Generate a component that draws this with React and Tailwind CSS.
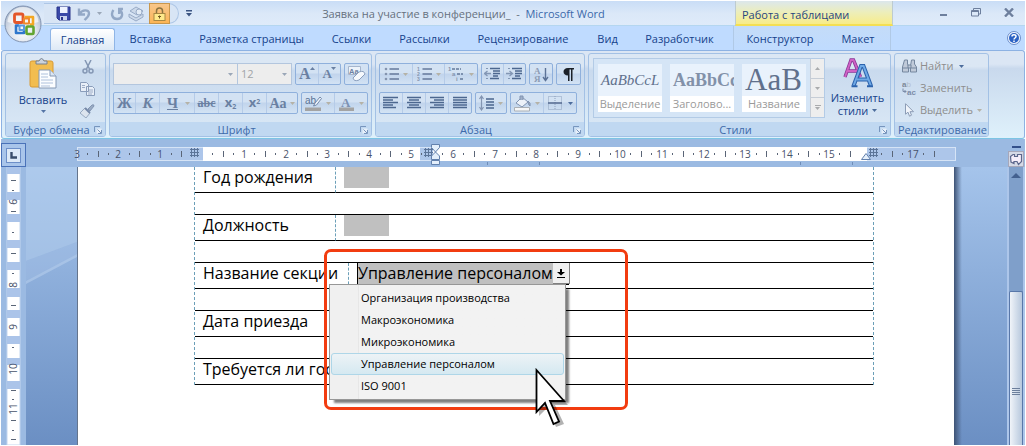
import React from "react";

const UI = "font-['Open_Sans','Noto_Sans',sans-serif]";

function Caret({ tone = "text-[#9aa7b8]" }) {
  return (
    <svg className={"shrink-0 " + tone} width="5" height="3" viewBox="0 0 5 3" fill="currentColor" aria-hidden="true">
      <path d="M0 0h5L2.5 3z" />
    </svg>
  );
}

function Strip({ className = "", children }) {
  return (
    <div className={"flex h-[22px] divide-x divide-[#b5cbe8] rounded-[2px] border border-[#8fb0dc] bg-linear-to-b from-[#d3e2f3] from-45% via-[#c1d4ec] via-50% to-[#d3e3f4] " + className}>
      {children}
    </div>
  );
}

function Tool({ label, className = "flex-1", children }) {
  return (
    <button type="button" aria-label={label} className={"flex items-center justify-center gap-[3px] text-[#6a80a2] " + className}>
      {children}
    </button>
  );
}

function Group({ title, width, launcher, children }) {
  return (
    <section aria-label={title} className={"flex flex-col overflow-hidden rounded-[3px] border border-[#a3c1e5] bg-linear-to-b from-[#dbe7f4] from-15% via-[#c9daee] via-20% to-[#dbe9f6] " + width}>
      <div className="flex h-[68px] shrink-0">{children}</div>
      <div className="flex flex-1 items-center bg-[#c0d8f1] px-[3px] text-[11px] leading-[15px] text-[#3e6aaa]">
        <span className="flex-1 text-center whitespace-nowrap">{title}</span>
        {launcher && (
          <button type="button" aria-label={"Параметры: " + title} className="text-[#7795bd]">
            <svg width="8" height="8" viewBox="0 0 8 8" fill="none" stroke="currentColor" aria-hidden="true">
              <path d="M6 .5H.5V6" />
              <rect x="2.5" y="2.5" width="5" height="5" fill="#e7f0fa" stroke="none" />
              <path d="M3.500 3.500 7 7M7.500 4v3.500H4" />
            </svg>
          </button>
        )}
      </div>
    </section>
  );
}

function Lines({ rows }) {
  return (
    <svg width="16" height="14" viewBox="0 0 16 14" stroke="#4c678f" strokeWidth="1.400" aria-hidden="true">
      {rows.map(([a, b], i) => (
        <path key={i} d={"M" + a + " " + (1.5 + i * 2.5) + "H" + b} />
      ))}
    </svg>
  );
}

function ListIcon({ marks }) {
  return (
    <svg width="16" height="16" viewBox="0 0 16 16" aria-hidden="true">
      {[3, 8, 13].map((y, i) => (
        <g key={y}>
          {marks ? (
            <text x="0" y={y + 2} fontSize="5" fontWeight="700" fill="#8494ae" fontFamily="Liberation Sans">{marks[i]}</text>
          ) : (
            <circle cx="2" cy={y} r="1.300" fill="#8494ae" />
          )}
          <path d={"M5.500 " + y + "H15"} stroke="#64799b" strokeWidth="1.300" />
        </g>
      ))}
    </svg>
  );
}

function MultiList() {
  return (
    <svg width="18" height="16" viewBox="0 0 18 16" aria-hidden="true">
      <g fontSize="6" fontWeight="700" fill="#8494ae" fontFamily="Liberation Sans">
        <text x="0" y="5">1</text>
        <text x="4" y="10">a</text>
        <text x="8" y="15">i</text>
      </g>
      <path d="M4 3h9M9 8h6M12 13h3" stroke="#64799b" strokeWidth="1.300" strokeDasharray="3 1" />
    </svg>
  );
}

function IndentIcon({ right }) {
  return (
    <svg width="17" height="14" viewBox="0 0 17 14" fill="none" aria-hidden="true">
      <path d="M6 1.500h10M9 4h7M9 6.500h7M9 9h5M6 11.500h9" stroke="#4c678f" strokeWidth="1.500" />
      <path d="M2 1.500h2M2 11.500h2" stroke="#8397b5" />
      <path d={right ? "M0 6.500h6M3.500 4 6.500 6.500 3.500 9" : "M7 6.500H1M3.500 4 .5 6.500 3.500 9"} stroke="#8397b5" strokeWidth="1.300" />
    </svg>
  );
}

function OfficeButton() {
  return (
    <button type="button" aria-label="Кнопка Office" className="absolute top-[4px] left-[3px]">
      <svg width="38" height="38" viewBox="0 0 38 38" aria-hidden="true">
        <defs>
          <radialGradient id="orb" cx="50%" cy="70%" r="65%">
            <stop offset="0" stopColor="#ffffff" />
            <stop offset=".55" stopColor="#dfe5ee" />
            <stop offset="1" stopColor="#aab8cc" />
          </radialGradient>
        </defs>
        <circle cx="19" cy="19" r="18" fill="url(#orb)" stroke="#8193b1" />
        <path d="M3.500 17a15.500 15 0 0 1 31 0q-15.500 5-31 0z" fill="#fff" opacity=".65" />
        <g fill="none" strokeLinejoin="round">
          <rect x="10.500" y="9" width="8.500" height="8.500" rx="1.500" stroke="#e4572a" strokeWidth="2.800" />
          <path d="M20.500 12h8.500v7.500h-3" stroke="#f3a722" strokeWidth="2.600" />
          <rect x="20" y="13.500" width="5" height="5" stroke="#f0882b" strokeWidth="2" />
          <path d="M15 20.500h-3V28h8v-3" stroke="#2f77cc" strokeWidth="2.600" />
          <rect x="15.500" y="20.500" width="4.500" height="4.500" stroke="#5b9be0" strokeWidth="2" />
          <rect x="22.500" y="21.500" width="7" height="7.500" rx="1" stroke="#62a530" strokeWidth="2.600" />
        </g>
      </svg>
    </button>
  );
}

function TitleBar() {
  return (
    <header className="relative flex h-[25px] items-center bg-linear-to-b from-[#c9ddf6] via-[#dbe8f8] to-[#dfebfa] shadow-[inset_0_-1px_#b4d6f0]">
      <OfficeButton />
      <div className="ml-[43px] flex h-[21px] w-[135px] items-center justify-end gap-[4px] rounded-r-full border border-l-0 border-[#adc6e6] bg-[#d8e5f5] pr-[8px]">
        <button type="button" aria-label="Сохранить">
          <svg width="15" height="15" viewBox="0 0 15 15" aria-hidden="true">
            <path d="M1 1h13v13H3l-2-2z" fill="#3a49a8" stroke="#29358a" />
            <path d="M4 1h7.500v6H4z" fill="#eef3ff" />
            <path d="M4 10h7v4H4z" fill="#c9d3ef" />
            <path d="M5 11h2v3H5z" fill="#29358a" />
          </svg>
        </button>
        <button type="button" aria-label="Отменить" className="flex items-center gap-[6px] pl-[2px]">
          <svg width="14" height="14" viewBox="0 0 14 14" fill="none" stroke="#93a8c6" strokeWidth="2.400" aria-hidden="true">
            <path d="M2 1.500v6h6M2.500 7C5 2.500 12 2 12 6.500c0 3-2.500 4.500-4.500 6.500" />
          </svg>
          <Caret />
        </button>
        <button type="button" aria-label="Повторить" className="pl-[4px]">
          <svg width="14" height="14" viewBox="0 0 14 14" fill="none" stroke="#93a8c6" strokeWidth="2.400" aria-hidden="true">
            <path d="M3.500 3C1 6 1.500 12 7 12s6.500-5.500 3-9M8 2h5M9.200 2v5" />
          </svg>
        </button>
        <button type="button" aria-label="Печать">
          <svg width="17" height="16" viewBox="0 0 17 16" fill="#ccd9ea" stroke="#98abc7" aria-hidden="true">
            <path d="M2 5 8 1l7 4-6 4z" />
            <path d="M1 8 8 12l7-4v3l-7 4-7-4z" />
            <circle cx="11" cy="6" r="3" fill="#e3ecf7" />
          </svg>
        </button>
        <button type="button" aria-label="Защитить" className="flex size-[21px] shrink-0 items-center justify-center border border-[#c9974c] bg-linear-to-b from-[#f7c68a] to-[#fcb555]">
          <svg width="13" height="14" viewBox="0 0 13 14" aria-hidden="true">
            <path d="M3.500 7V4a3 3 0 0 1 6 0v3" fill="none" stroke="#8c7440" strokeWidth="1.500" />
            <rect x="1" y="6.500" width="11" height="7" fill="#ffe98b" stroke="#a88842" />
            <path d="M6.500 8.500v3M5 9.500h3" stroke="#6e5722" />
          </svg>
        </button>
      </div>
      <button type="button" aria-label="Настройка панели" className="ml-[7px] text-[#3b5583]">
        <svg width="6" height="7" viewBox="0 0 6 7" fill="currentColor" aria-hidden="true">
          <path d="M0 0h6v1.500H0zM0 3h6L3 6.500z" />
        </svg>
      </button>
      <h1 className="flex-1 text-center text-[11px] leading-[15px] whitespace-nowrap text-[#66717f]">
        Заявка на участие в конференции_ &nbsp;-&nbsp; <span className="text-[#3b69aa]">Microsoft Word</span>
      </h1>
      <div className="mr-[132px] h-[25px] w-[158px] border-x border-b-2 border-x-[#bdcbd0] border-b-[#f4df52] bg-linear-to-b from-[#dce7ec] via-[#edeeb9] to-[#f8ec87] px-[6px] pt-[6px] text-[11px] leading-[15px] whitespace-nowrap text-[#27467f]">
        Работа с таблицами
      </div>
      <div className="absolute top-[7px] right-[11px] flex items-center gap-[23px] text-[#6d7f9d]">
        <button type="button" aria-label="Свернуть">
          <svg width="9" height="9" viewBox="0 0 9 9" aria-hidden="true"><path d="M1 7h7" stroke="currentColor" strokeWidth="2" /></svg>
        </button>
        <button type="button" aria-label="Восстановить">
          <svg width="10" height="9" viewBox="0 0 10 9" fill="none" stroke="currentColor" aria-hidden="true">
            <path d="M2.500 2V.5h7V6H8M.5 2.500h7V8h-7zM.5 3.500h7" />
          </svg>
        </button>
        <button type="button" aria-label="Закрыть">
          <svg width="10" height="9" viewBox="0 0 10 9" fill="none" stroke="currentColor" strokeWidth="2.400" aria-hidden="true">
            <path d="M1 .5 9 8.500M9 .5 1 8.500" />
          </svg>
        </button>
      </div>
    </header>
  );
}

const tabs = [
  ["Вставка", "w-[71px]"],
  ["Разметка страницы", "w-[131px]"],
  ["Ссылки", "w-[69px]"],
  ["Рассылки", "w-[77px]"],
  ["Рецензирование", "w-[120px]"],
  ["Вид", "w-[49px]"],
  ["Разработчик", "w-[95px]"],
];

function Tabs() {
  return (
    <nav className="flex h-[24px] items-end bg-[#bfdbff] pl-[49px] text-[11px] leading-[22px] whitespace-nowrap text-[#15428b]">
      <button type="button" className="h-[22px] w-[65px] rounded-t-[3px] border border-b-0 border-[#8fb5e6] bg-linear-to-b from-white to-[#dde9f6]">Главная</button>
      {tabs.map(([name, width]) => (
        <button key={name} type="button" className={"h-[22px] " + width}>{name}</button>
      ))}
      <div className="ml-[6px] flex h-[24px] w-[158px] items-end border-x border-[#b0c9e6] bg-linear-to-b from-[#c4dcf8] to-[#bfdbff]">
        <button type="button" className="h-[22px] w-[92px]">Конструктор</button>
        <button type="button" className="h-[22px] flex-1">Макет</button>
      </div>
      <button type="button" aria-label="Справка" className="mr-[4px] mb-[5px] ml-auto">
        <svg width="14" height="14" viewBox="0 0 14 14" aria-hidden="true">
          <circle cx="7" cy="7" r="6.500" fill="#f3f8ff" stroke="#6a8dca" />
          <circle cx="7" cy="7" r="5" fill="#2c62c4" />
          <path d="M5 5.500C5 3.300 9 3.300 9 5.500 9 7 7 7 7 8.500M7 9.500V11" fill="none" stroke="#fff" strokeWidth="1.500" />
        </svg>
      </button>
    </nav>
  );
}

function Clipboard() {
  return (
    <Group title="Буфер обмена" width="w-[101px]" launcher>
      <button type="button" className="flex w-[74px] flex-col items-center pt-[4px] text-[11px] leading-[15px] text-[#15428b]">
        <svg width="28" height="31" viewBox="0 0 28 31" aria-hidden="true">
          <rect x="1" y="3" width="23" height="26" rx="2" fill="#f2bd50" stroke="#d99a33" />
          <path d="M7 6V3h3q2.500-5 5 0h3v3z" fill="#ccd3dc" stroke="#76818f" />
          <path d="M10 12h11l6 6v12H10z" fill="#fbfdff" stroke="#8599b5" />
          <path d="M21 12v6h6" fill="#dbe6f3" stroke="#8599b5" />
          <path d="M12 16h7M12 19h7M12 22h12M12 25h12M12 28h9" stroke="#aec1dc" />
        </svg>
        <span className="mt-[3px]">Вставить</span>
        <span className="mt-[3px]"><Caret tone="text-[#5474a5]" /></span>
      </button>
      <div className="flex flex-col items-center gap-[8px] pt-[6px]">
        <button type="button" aria-label="Вырезать">
          <svg width="12" height="14" viewBox="0 0 12 14" fill="none" stroke="#8497b4" strokeWidth="1.500" aria-hidden="true">
            <path d="M3 0 7.500 9M9 0 4.500 9" />
            <circle cx="3" cy="11" r="2" />
            <circle cx="9" cy="11" r="2" />
          </svg>
        </button>
        <button type="button" aria-label="Копировать">
          <svg width="15" height="14" viewBox="0 0 15 14" fill="#e8eff8" stroke="#8a9dba" aria-hidden="true">
            <path d="M.5.500h6l2 2v7h-8zM6.500 4.500h6l2 2v7h-8z" />
            <path d="M2 3.500h3M2 5.500h3M8 8h5M8 10h5M8 12h4" strokeWidth=".8" />
          </svg>
        </button>
        <button type="button" aria-label="Формат по образцу">
          <svg width="15" height="14" viewBox="0 0 15 14" aria-hidden="true">
            <path d="m8 5 4-4q2-1 2 1l-4 5z" fill="#9aabc3" stroke="#8295b2" />
            <path d="m5 4 5 5-4 5-6-5z" fill="#dce4ee" stroke="#98a9c1" />
            <path d="m5 4 5 5" stroke="#7488a8" strokeWidth="2" />
          </svg>
        </button>
      </div>
    </Group>
  );
}

const serif = "font-['Liberation_Serif',serif]";

function FontGroup() {
  return (
    <Group title="Шрифт" width="w-[263px]" launcher>
      <div className="flex flex-1 flex-col gap-[7px] px-[3px] pt-[9px]">
        <div className="flex">
          <button type="button" aria-label="Шрифт" className="flex h-[22px] w-[125px] items-center justify-end border border-[#b3c6de] bg-[#ededed] pr-[4px]"><Caret /></button>
          <button type="button" aria-label="Размер шрифта" className="-ml-px flex h-[22px] w-[55px] items-center justify-between border border-[#b3c6de] bg-[#ededed] pr-[4px] pl-[3px] text-[11px] text-[#a0a4a8]">12<Caret /></button>
          <Strip className="ml-[3px] w-[46px]">
            <Tool label="Увеличить размер"><span className={serif + " text-[16px] font-bold leading-[18px]"}>A</span><span className="-ml-[4px] -mt-[12px] rotate-180"><Caret tone="text-[#6a80a2]" /></span></Tool>
            <Tool label="Уменьшить размер"><span className={serif + " text-[13px] font-bold leading-[18px]"}>A</span><span className="-ml-[4px] -mt-[12px]"><Caret tone="text-[#6a80a2]" /></span></Tool>
          </Strip>
          <Strip className="ml-[3px] w-[25px]">
            <Tool label="Очистить формат">
              <svg width="18" height="17" viewBox="0 0 18 17" aria-hidden="true">
                <path d="M.5.500h12v8H.5z" fill="#edf3fa" stroke="#a6b6cd" />
                <text x="1" y="7.500" fontSize="7.500" fontWeight="700" fill="#6d82a3" fontFamily="Liberation Sans">Aa</text>
                <path d="m5 12 6-6q5-2 6 2l-6 6q-5 2-6-2z" fill="#f6f9fd" stroke="#8a9ebd" />
              </svg>
            </Tool>
          </Strip>
        </div>
        <div className={"flex gap-[3px] " + serif}>
          <Strip className="w-[185px]">
            <Tool label="Полужирный" className="w-[22px]"><b className="text-[15px]">Ж</b></Tool>
            <Tool label="Курсив" className="w-[24px]"><b className="text-[15px] italic">К</b></Tool>
            <Tool label="Подчеркнутый" className="w-[35px] pl-[3px]"><b className="flex-1 text-[15px] underline">Ч</b><span className="pr-[4px]"><Caret tone="text-[#b5b2a6]" /></span></Tool>
            <Tool label="Зачеркнутый" className="w-[24px]"><b className="text-[12px] line-through">abc</b></Tool>
            <Tool label="Подстрочный" className="w-[24px]"><b className="font-['Open_Sans',sans-serif] text-[13px]">x<sub className="text-[7px]">2</sub></b></Tool>
            <Tool label="Надстрочный" className="w-[24px]"><b className="font-['Open_Sans',sans-serif] text-[13px]">x<sup className="text-[7px]">2</sup></b></Tool>
            <Tool label="Регистр"><b className="text-[14px]">Aa</b><Caret tone="text-[#b5b2a6]" /></Tool>
          </Strip>
          <Strip className="w-[67px]">
            <Tool label="Цвет выделения">
              <svg width="18" height="17" viewBox="0 0 18 17" aria-hidden="true">
                <text x="0" y="9" fontSize="10" fill="#5a7396" fontFamily="Liberation Sans">ab</text>
                <path d="m10 8 5-6 1.500 1.500-5 6.500-3 1z" fill="#edf3fa" stroke="#7389aa" />
                <path d="M0 12.500h16V16H0z" fill="#a3a3a3" />
              </svg>
              <Caret tone="text-[#b5b2a6]" />
            </Tool>
            <Tool label="Цвет текста">
              <svg width="18" height="17" viewBox="0 0 18 17" aria-hidden="true">
                <text x="3" y="12" fontSize="13" fontWeight="700" fill="#7d92b3" fontFamily="Liberation Serif">A</text>
                <path d="M1 12.500h15V16H1z" fill="#a3a3a3" />
              </svg>
              <Caret tone="text-[#b5b2a6]" />
            </Tool>
          </Strip>
        </div>
      </div>
    </Group>
  );
}

const L = { left: [[0, 15], [0, 10], [0, 15], [0, 10], [0, 13]], center: [[1, 15], [3, 13], [1, 15], [3, 13], [1, 15]], right: [[1, 15], [5, 15], [1, 15], [5, 15], [1, 15]], full: [[1, 15], [1, 15], [1, 15], [1, 15], [1, 15]] };

function ParagraphGroup() {
  const pale = "text-[#b5b2a6]";
  return (
    <Group title="Абзац" width="w-[210px]" launcher>
      <div className="flex flex-1 flex-col gap-[7px] px-[3px] pt-[9px]">
        <div className="flex gap-[3px]">
          <Strip className="w-[99px]">
            <Tool label="Маркеры"><ListIcon /><Caret tone={pale} /></Tool>
            <Tool label="Нумерация"><ListIcon marks={["1", "2", "3"]} /><Caret tone={pale} /></Tool>
            <Tool label="Многоуровневый список"><MultiList /><Caret tone={pale} /></Tool>
          </Strip>
          <Strip className="w-[45px]">
            <Tool label="Уменьшить отступ"><IndentIcon /></Tool>
            <Tool label="Увеличить отступ"><IndentIcon right /></Tool>
          </Strip>
          <Strip className="w-[24px]">
            <Tool label="Сортировка">
              <svg width="15" height="17" viewBox="0 0 15 17" aria-hidden="true">
                <g fontSize="9" fontWeight="700" fill="#8d9cb5" fontFamily="Liberation Serif"><text x="0" y="8">А</text><text x="0" y="16">Я</text></g>
                <path d="M11.500 2v12M9 11l2.500 3.500L14 11" fill="none" stroke="#5c7397" strokeWidth="1.400" />
              </svg>
            </Tool>
          </Strip>
          <Strip className="w-[25px]">
            <Tool label="Знаки абзаца">
              <svg width="12" height="13" viewBox="0 0 12 13" fill="#1b2028" aria-hidden="true"><path d="M11 0v1.500H9.500V13H8V1.500H6.500V13H5V7.500C-1 7.500-1 0 5 0z" /></svg>
            </Tool>
          </Strip>
        </div>
        <div className="flex gap-[3px]">
          <Strip className="w-[93px]">
            <Tool label="По левому краю"><Lines rows={L.left} /></Tool>
            <Tool label="По центру"><Lines rows={L.center} /></Tool>
            <Tool label="По правому краю"><Lines rows={L.right} /></Tool>
            <Tool label="По ширине"><Lines rows={L.full} /></Tool>
          </Strip>
          <Strip className="w-[32px]">
            <Tool label="Междустрочный интервал">
              <svg width="16" height="16" viewBox="0 0 16 16" fill="none" aria-hidden="true">
                <path d="M2.500 1v14M.5 4l2-3 2 3M.5 12l2 3 2-3" stroke="#8395b2" strokeWidth="1.200" />
                <path d="M7 4h8M7 7h8M7 10h8M7 13h8" stroke="#4c678f" strokeWidth="1.300" />
              </svg>
              <Caret tone={pale} />
            </Tool>
          </Strip>
          <Strip className="w-[67px]">
            <Tool label="Заливка">
              <svg width="18" height="17" viewBox="0 0 18 17" aria-hidden="true">
                <path d="m2 8 6-6 6 5-6 5z" fill="#edf2f9" stroke="#8093b1" />
                <path d="M6 5V1h3v4M14 6q3 2 2 5-2-1-2-5z" fill="#a0b0c8" stroke="#8093b1" />
                <path d="M.5 12.500h15v3.500H.5z" fill="#f6f7f8" stroke="#abb0b6" />
              </svg>
              <Caret tone={pale} />
            </Tool>
            <Tool label="Границы" className="flex-1 gap-[5px]">
              <svg width="15" height="15" viewBox="0 0 15 15" aria-hidden="true">
                <path d="M.5.500h13v13H.5zM7 0v14" fill="none" stroke="#8da0bd" strokeDasharray="1 1" />
                <path d="M0 7h14" stroke="#53698f" strokeWidth="1.300" />
              </svg>
              <Caret tone="text-[#4c6c9c]" />
            </Tool>
          </Strip>
        </div>
      </div>
    </Group>
  );
}

function StyleCard({ name, sample }) {
  return (
    <button type="button" className={"flex h-[48px] w-[64px] flex-col overflow-hidden bg-[#e9f2fc] whitespace-nowrap " + UI}>
      <span className={"flex h-[32px] w-full shrink-0 items-center overflow-hidden pl-[3px] " + serif}>{sample}</span>
      <span className="w-full bg-white text-center text-[11px] leading-[16px] text-[#9a9a9a]">{name}</span>
    </button>
  );
}

function StylesGroup() {
  return (
    <Group title="Стили" width="w-[303px]" launcher>
      <div className="mt-[4px] ml-[4px] flex h-[60px] border border-[#b3cbe6] bg-[#d5e5f6]">
        <div className="flex items-center gap-[8px] px-[4px] text-[#60708c]">
          <StyleCard name="Выделение" sample={<span className="text-[15px] italic">AaBbCcL</span>} />
          <StyleCard name="Заголово..." sample={<span className="text-[18px] font-bold text-[#8291a9]">AaBbCc</span>} />
          <StyleCard name="Название" sample={<span className="text-[31px] leading-[32px]">AaB</span>} />
        </div>
        <div className="flex w-[14px] flex-col divide-y divide-[#c6cdd6] border-l border-[#c6cdd6] bg-[#eeeeee]">
          <button type="button" aria-label="Вверх" className="flex flex-1 items-center justify-center"><span className="rotate-180"><Caret tone="text-[#a9abad]" /></span></button>
          <button type="button" aria-label="Вниз" className="flex flex-1 items-center justify-center"><Caret tone="text-[#a9abad]" /></button>
          <button type="button" aria-label="Все стили" className="flex flex-1 flex-col items-center justify-center gap-[1px]"><i className="block h-px w-[6px] bg-[#a9abad]" /><Caret tone="text-[#a9abad]" /></button>
        </div>
      </div>
      <button type="button" className="flex flex-1 flex-col items-center pt-[4px] text-[11px] leading-[13px] text-[#15428b]">
        <svg width="30" height="30" viewBox="0 0 30 30" fill="none" aria-hidden="true">
          <path d="M2 19 8 2h2.500l7 17M4 13h10" stroke="#8a3797" strokeWidth="3.400" />
          <path d="M2 19 8 2h2.500l7 17M4 13h10" stroke="#cf62c4" strokeWidth="1.800" />
          <path d="M10.500 28 18 8h2.500l7.500 20M14 21.500h11" stroke="#2d63ad" strokeWidth="4" />
          <path d="M10.500 28 18 8h2.500l7.500 20M14 21.500h11" stroke="#6fa9e6" strokeWidth="2" />
          <path d="M8.500 28.300h6M24 28.300h6" stroke="#2d63ad" strokeWidth="2" />
        </svg>
        <span className="mt-[3px]">Изменить</span>
        <span className="flex items-center gap-[4px]">стили <Caret tone="text-[#4c6c9c]" /></span>
      </button>
    </Group>
  );
}

function EditingGroup() {
  return (
    <Group title="Редактирование" width="w-[95px]">
      <div className="flex flex-col gap-[6px] pt-[4px] pl-[7px] text-[11px] leading-[16px] text-[#8e8e8e]">
        <button type="button" className="flex items-center gap-[3px]">
          <svg width="15" height="14" viewBox="0 0 15 14" fill="#c0cad9" stroke="#75879f" aria-hidden="true">
            <path d="M2.500 1h3v4l1 2v6h-6V8zM9.500 1h3v4l2 3v5h-6V7z" /><path d="M6 6h3v3H6zM.5 9h6M8.500 9h6" />
          </svg>
          <span className="pr-[3px]">Найти</span><Caret tone="text-[#4c6c9c]" />
        </button>
        <button type="button" className="flex items-center gap-[3px]">
          <svg width="15" height="16" viewBox="0 0 15 16" fontFamily="Liberation Sans" fontSize="8" aria-hidden="true">
            <text x="0" y="7" fontWeight="700" fill="#7e8998">a<tspan fontWeight="400" fill="#b4becb">b</tspan></text>
            <text x="5" y="15" fontWeight="700" fill="#7c8ca8">ac</text>
            <path d="M1 8.500v3h3M2.500 10 4 11.500 2.500 13" fill="none" stroke="#7c8ca8" />
          </svg>
          Заменить
        </button>
        <button type="button" className="flex items-center gap-[3px]">
          <svg width="15" height="14" viewBox="0 0 15 14" fill="#f0f4fa" stroke="#8c9cb5" aria-hidden="true"><path d="M3.500.700v10.500l2.500-2 1.500 4 2-1-1.500-3.500h3.500z" /></svg>
          <span className="pr-[1px]">Выделить</span><Caret tone="text-[#b5b2a6]" />
        </button>
      </div>
    </Group>
  );
}

function Ribbon() {
  return (
    <div className="flex h-[89px] gap-[3px] rounded-[3px] border border-[#8db2e3] border-b-[#7cc5e4] bg-linear-to-b from-[#dbe6f4] from-15% via-[#c9d9ed] via-20% to-[#dff1fb] pt-[2px] pb-[1px] pl-[3px]">
      <Clipboard />
      <FontGroup />
      <ParagraphGroup />
      <StylesGroup />
      <EditingGroup />
    </div>
  );
}

function CellMark({ x }) {
  return <path d={"M" + x + " 10.500h9M" + x + " 13.500h9M" + x + " 16.500h9M" + (x + 1.5) + " 9v9M" + (x + 4.5) + " 9v9M" + (x + 7.5) + " 9v9"} stroke="#5c7599" strokeWidth="1" />;
}

const numerals = [-3, -2, -1, 1, 2, 3, 4, 5, 6, 7, 8, 9, 10, 11, 12, 13, 14, 15, 17];

function HorizontalRuler() {
  const origin = 176;
  const unit = 41.8;
  const ticks = [];
  for (let q = -11; q <= 70; q++) {
    if (q % 4 === 0 || q === -1 || q === 22 || q === 63) continue;
    ticks.push(q);
  }
  return (
    <div className="flex h-[28px] items-end bg-[#9bbae2]">
      <button type="button" aria-label="Табуляция" className="flex h-[24px] w-[25px] shrink-0 items-center justify-center border border-[#4a72b8] bg-[#a9c5ea]">
        <span className="flex size-[15px] items-center justify-center border border-[#6d8fc8] bg-[#dde9f7]">
          <svg width="7" height="7" viewBox="0 0 7 7" aria-hidden="true"><path d="M1.500 0v5.500H7" fill="none" stroke="#3a4d6b" strokeWidth="2.400" /></svg>
        </span>
      </button>
      <svg className="h-[28px] min-w-0 flex-1" viewBox="0 0 981 28" preserveAspectRatio="xMinYMin meet" role="img" aria-label="Линейка">
        <rect x="51.500" y="8.500" width="878" height="13" fill="#adc6ea" stroke="#d6e4f6" />
        <path d="M177 8h217v14H177zM407 8h434v14H407z" fill="#fff" />
        {ticks.map((q) => (
          <path key={q} d={"M" + Math.round(origin + (q * unit) / 4) + ".5 " + (q % 2 === 0 ? "12v6" : "14v2")} stroke="#5a6577" />
        ))}
        <g fontSize="10" fill="#47526a" textAnchor="middle" fontFamily="Open Sans, sans-serif">
          {numerals.map((n) => (
            <text key={n} x={Math.round(origin + n * unit)} y="19">{Math.abs(n)}</text>
          ))}
        </g>
        <CellMark x={164} />
        <CellMark x={398} />
        <CellMark x={843} />
        <g fill="#e4effb" stroke="#6381ad">
          <path d="M405.500 5.500h8v3l-4 4.500-4-4.500zM409.500 13l4 4v3.500h-8V17zM405.500 21.500h8v4h-8z" />
          <path d="m835.500 20.500 4.500-6 4.500 6z" />
        </g>
        <path d="M461.500 23v3M513.500 23v3M774.500 23v3M826.500 23v3" stroke="#6f8db8" />
      </svg>
      <div className="flex h-[28px] w-[18px] flex-col items-center justify-between pt-[7px]">
        <i className="block h-[2px] w-[9px] bg-[#33508a]" />
        <button type="button" aria-label="Линейки" className="flex size-[16px] items-center justify-center border border-[#a6a7ba] bg-[#d5d9e6]">
          <svg width="14" height="13" viewBox="0 0 14 13" aria-hidden="true">
            <path d="M1.500 3.500 4 1.500h1.500v2h3v-2h4v7l-3 3-1.500-3h-3v2l-3-1.500z" fill="#f6eefa" stroke="#5d678c" strokeWidth="1.200" />
          </svg>
        </button>
      </div>
    </div>
  );
}

const shades = [[167, 7], [192, 8], [214, 8], [240, 8], [262, 8], [288, 9], [310, 8], [336, 8], [358, 7], [381, 8]];
const marks = [["6", 35], ["8", 118], ["9", 160], ["10", 202], ["11", 242]];
const dashes = [13, 23, 44, 65, 86, 106, 138, 180, 223, 232, 253, 263, 272];

function VerticalRuler() {
  return (
    <div className="w-[25px] shrink-0 bg-[#9bbae2]">
      <svg width="25" height="278" viewBox="0 0 25 278" role="img" aria-label="Вертикальная линейка">
        <rect x="6" y="0" width="13" height="278" fill="#fff" stroke="#c3d6ef" />
        {shades.map(([y, h]) => (
          <rect key={y} x="6" y={y - 167} width="13" height={h} fill="#abc4e9" />
        ))}
        {dashes.map((y, i) => (
          <path key={y} d={"M" + (i % 2 ? 11 : 10) + " " + y + ".5h" + (i % 2 ? 2 : 5)} stroke="#5a6577" />
        ))}
        <g fontSize="10" fill="#47526a" textAnchor="middle" fontFamily="Open Sans, sans-serif">
          {marks.map(([t, y]) => (
            <text key={t} transform={"translate(16 " + y + ") rotate(-90)"}>{t}</text>
          ))}
        </g>
      </svg>
    </div>
  );
}

const line = "border-b border-black p-0 align-top";
const side = "border-[#6b9fb8] [border-left-style:dashed] [border-right-style:dashed]";
const options = ["Организация производства", "Макроэкономика", "Микроэкономика", "Управление персоналом", "ISO 9001"];

function Spacer() {
  return <tr className="h-[22px]"><td colSpan={3} className={line} /></tr>;
}

function TextRow({ id, label, field }) {
  return (
    <tr className="h-[26px]">
      <td className={line + " pl-[8px]"}><label htmlFor={field ? id : undefined}>{label}</label></td>
      <td colSpan={2} className={line + (field ? " border-l border-l-[#6b9fb8] pl-[8px] [border-left-style:dashed]" : "")}>
        {field && <input id={id} readOnly className="block h-[21px] w-[45px] bg-[#c0c0c0]" />}
      </td>
    </tr>
  );
}

function SectionPicker() {
  return (
    <div className="relative ml-[8px] w-[212px]">
      <button id="section" type="button" aria-haspopup="listbox" aria-expanded="true" className="flex h-[22px] w-full border-b border-l border-black bg-[#c0c0c0] text-left">
        <span className="flex-1 leading-[21px] whitespace-nowrap">Управление персоналом</span>
        <span className="flex h-[21px] w-[17px] shrink-0 items-center justify-center border-r border-b border-[#808080] bg-[#f0f0f0]">
          <svg width="8" height="9" viewBox="0 0 8 9" aria-hidden="true"><path d="M3 0h2v3h3L4 6.500 0 3h3zM0 8h8v1H0z" /></svg>
        </span>
      </button>
      <ul role="listbox" aria-labelledby="section" className={"absolute top-[21px] -left-[28px] w-[237px] border border-[#979797] bg-[#f0f0f0] bg-linear-to-r from-[#f0f0f0] from-[28px] via-[#dcdcdc] via-[28px] to-[#f2f2f2] to-[29px] px-[1px] py-[2px] text-[11px] text-black shadow-[4px_4px_2px_-1px_rgba(0,0,0,0.5)] " + UI}>
        {options.map((name) => (
          <li key={name} role="option" aria-selected={name === "Управление персоналом"}
            className={"h-[22px] rounded-[3px] border pl-[29px] leading-[20px] whitespace-nowrap " + (name === "Управление персоналом" ? "border-[#aed6e8] bg-linear-to-b from-[#edf3f6] to-[#d5e9f1]" : "border-transparent")}>
            {name}
          </li>
        ))}
      </ul>
    </div>
  );
}

function Page() {
  return (
    <main className="relative flex-1 border-l border-[#64748c] bg-white pr-[80px] pl-[116px]">
      <table className={"w-full table-fixed border-separate border-spacing-0 border-x text-[16px] leading-[21px] text-black " + side}>
        <colgroup>
          <col className="w-[140px]" />
          <col className="w-[13px]" />
          <col />
        </colgroup>
        <tbody>
          <TextRow id="birth" label="Год рождения" field />
          <Spacer />
          <TextRow id="post" label="Должность" field />
          <Spacer />
          <tr className="h-[26px]">
            <td colSpan={2} className={line + " pl-[8px]"}><label htmlFor="section">Название секции</label></td>
            <td className={line + " border-l border-l-[#6b9fb8] [border-left-style:dashed]"}><SectionPicker /></td>
          </tr>
          <Spacer />
          <TextRow id="arrival" label="Дата приезда" />
          <Spacer />
          <tr className="h-[26px]"><td colSpan={3} className={line + " pl-[8px]"}>Требуется ли гос</td></tr>
        </tbody>
      </table>
      <div className="pointer-events-none absolute top-[82px] left-[246px] h-[161px] w-[304px] rounded-[7px] border-3 border-[#f23c10]" />
      <svg className="pointer-events-none absolute top-[200px] left-[456px]" width="38" height="60" viewBox="0 0 38 60" aria-hidden="true">
        <path d="M5 6v43l9-9 8 20 8-3-9-19h13z" fill="#000" opacity=".3" />
        <path d="M2.500 3v42l8.500-9 8.500 21 5.500-2.500-9-20.500h14z" fill="#fff" stroke="#000" strokeWidth="1.800" />
      </svg>
    </main>
  );
}

function Workspace() {
  return (
    <div className="flex flex-1 bg-linear-to-b from-[#a5c4eb] to-[#6b8fc3]">
      <VerticalRuler />
      <svg className="h-[278px] w-[51px] shrink-0" viewBox="0 0 52 278" preserveAspectRatio="none" aria-hidden="true">
        <path d="M0 0h52v75L0 94z" fill="#b6cfee" opacity=".5" />
        <path d="M0 94 52 75v12L0 114z" fill="#a8c3e8" opacity=".35" />
        <path d="M0 114 52 87v3L0 117z" fill="#bed3f0" opacity=".5" />
      </svg>
      <Page />
      <div className="w-[53px] shrink-0 bg-linear-to-r from-[#3e5375] via-transparent via-15% to-transparent" />
      <div className="flex w-[18px] shrink-0 flex-col border-x-2 border-[#adc6ea] bg-[#7f9fca]">
        <button type="button" aria-label="Прокрутить вверх" className="flex h-[16px] items-center justify-center">
          <svg width="10" height="5" viewBox="0 0 10 5" fill="#43608f" aria-hidden="true"><path d="M5 0 10 5H0z" /></svg>
        </button>
        <div className="mt-[108px] flex flex-1 flex-col items-center rounded-t-[2px] border border-b-0 border-[#5877a9] bg-linear-to-r from-[#f0f4f9] to-[#b7c8dd] pt-[96px]">
          <i className="block h-[7px] w-[8px] bg-[repeating-linear-gradient(to_bottom,#6c7f9c_0_1px,transparent_1px_2px)]" />
        </div>
      </div>
    </div>
  );
}

export default function App() {
  return (
    <div className={"flex min-h-screen flex-col bg-white p-px " + UI}>
      <TitleBar />
      <Tabs />
      <Ribbon />
      <HorizontalRuler />
      <Workspace />
    </div>
  );
}
